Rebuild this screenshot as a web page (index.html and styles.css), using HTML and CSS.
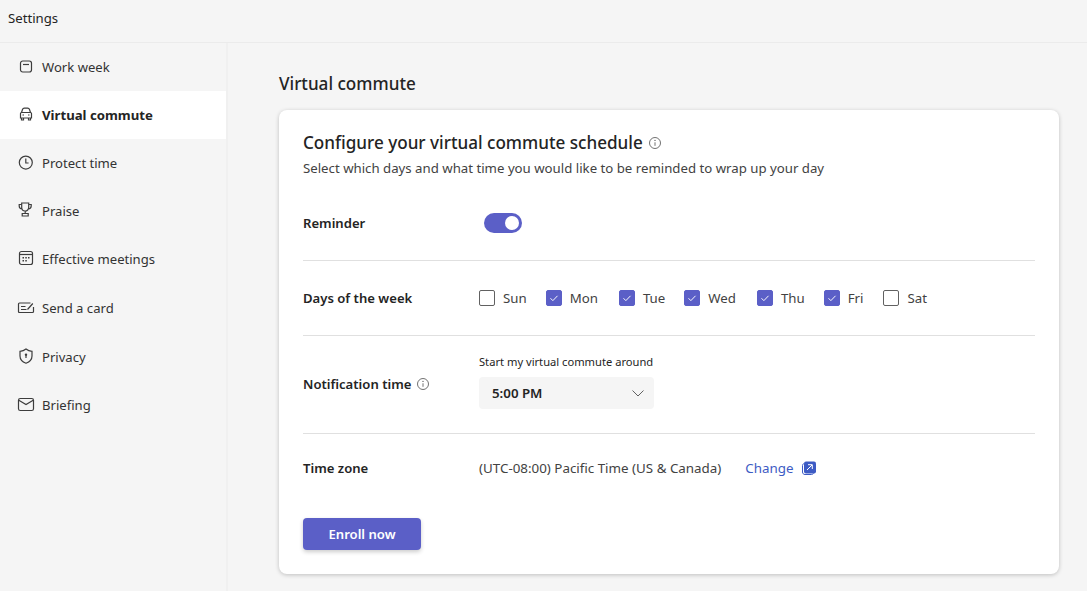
FILE: index.html
```html
<!DOCTYPE html>
<html lang="en">
<head>
<meta charset="utf-8">
<title>Settings</title>
<link rel="stylesheet" href="styles.css">
</head>
<body>
<header class="topbar">Settings</header>
<div class="shell">
  <nav class="sidebar">
    <a class="nav-item"><svg class="nav-icon" viewBox="0 0 20 20"><rect x="4.500" y="5" width="11" height="11" rx="2.200"/><path d="M7 8.500h6"/></svg><span>Work week</span></a>
    <a class="nav-item active"><svg class="nav-icon" viewBox="0 0 20 20"><path d="M5.500 8.500l1-3C6.800 4.600 7.400 4.200 8.300 4.200h3.400c.9 0 1.500.4 1.800 1.300l1 3M5.500 8.500h9c.6 0 1 .4 1 1v4.500h-11V9.500c0-.6.4-1 1-1zM5.500 14v2h2v-2M12.500 14v2h2v-2"/><path class="dot" d="M6.500 10.500h1.500v1H6.500zM12 10.500h1.500v1H12z"/></svg><span>Virtual commute</span></a>
    <a class="nav-item"><svg class="nav-icon" viewBox="0 0 20 20"><circle cx="9.800" cy="10.600" r="6.500"/><path d="M9.800 6.500v4.500h2.800"/></svg><span>Protect time</span></a>
    <a class="nav-item"><svg class="nav-icon" viewBox="0 0 20 20"><path d="M5.700 3h7v4.500a3.500 3.500 0 0 1-7 0zM5.700 4.500H3.200v1.500c0 1.500 1.200 2.800 3 3M12.700 4.500h2.500v1.500c0 1.500-1.200 2.800-3 3M9.200 11v2.500M6.200 13.500h6v2.500h-6z"/></svg><span>Praise</span></a>
    <a class="nav-item"><svg class="nav-icon" viewBox="0 0 20 20"><rect x="3.500" y="3.500" width="13" height="13" rx="2"/><path d="M3.500 6.500h13"/><path class="dot" d="M6.500 9h1.500v1.500H6.500zM9.300 9h1.500v1.500H9.300zM12 9h1.500v1.500H12zM6.500 12h1.500v1.500H6.500zM9.300 12h1.500v1.500H9.300z"/></svg><span>Effective meetings</span></a>
    <a class="nav-item nudge"><svg class="nav-icon" viewBox="0 0 20 20"><path d="M17.500 10v4.500c0 .6-.5 1-1 1H3.500c-.6 0-1-.4-1-1v-7.500c0-.6.4-1 1-1h11"/><path d="M5 9.500h4.500M5 12.500h5.500M11.500 12.500L16.800 6.500"/></svg><span>Send a card</span></a>
    <a class="nav-item nudge"><svg class="nav-icon" viewBox="0 0 20 20"><path d="M10 3c1.800 1.500 3.800 2.200 6 2.300V10c0 3.500-2.200 5.800-6 7.200-3.800-1.400-6-3.700-6-7.200V5.300C6.200 5.200 8.200 4.500 10 3z"/><circle class="dot" cx="10" cy="8.800" r="1.200"/><path d="M10 9.500v2.500"/></svg><span>Privacy</span></a>
    <a class="nav-item"><svg class="nav-icon" viewBox="0 0 20 20"><rect x="2.500" y="4.500" width="15" height="12" rx="1.800"/><path d="M2.800 6.300L10 10.500l7.200-4.200"/></svg><span>Briefing</span></a>
  </nav>
  <main class="content">
    <h1 class="page-title">Virtual commute</h1>
    <section class="card">
      <div class="card-head">
        <h2 class="card-title">Configure your virtual commute schedule <svg class="info" viewBox="0 0 14 14"><circle cx="7" cy="7" r="5.500"/><path d="M7 6.300v3.500"/><circle class="info-dot" cx="7" cy="4.400" r=".7"/></svg></h2>
        <p class="card-sub">Select which days and what time you would like to be reminded to wrap up your day</p>
      </div>
      <div class="row row-reminder">
        <div class="label">Reminder</div>
        <div class="toggle"><span class="knob"></span></div>
      </div>
      <div class="row row-days">
        <div class="label">Days of the week</div>
        <div class="days">
          <label class="day d-sun"><span class="box"></span>Sun</label>
          <label class="day d-mon"><span class="box on"><svg viewBox="0 0 16 16"><path d="M4 8.300l2.700 2.700L12 5.500"/></svg></span>Mon</label>
          <label class="day d-tue"><span class="box on"><svg viewBox="0 0 16 16"><path d="M4 8.300l2.700 2.700L12 5.500"/></svg></span>Tue</label>
          <label class="day d-wed"><span class="box on"><svg viewBox="0 0 16 16"><path d="M4 8.300l2.700 2.700L12 5.500"/></svg></span>Wed</label>
          <label class="day d-thu"><span class="box on"><svg viewBox="0 0 16 16"><path d="M4 8.300l2.700 2.700L12 5.500"/></svg></span>Thu</label>
          <label class="day d-fri"><span class="box on"><svg viewBox="0 0 16 16"><path d="M4 8.300l2.700 2.700L12 5.500"/></svg></span>Fri</label>
          <label class="day"><span class="box"></span>Sat</label>
        </div>
      </div>
      <div class="row row-time">
        <div class="label">Notification time <svg class="info" viewBox="0 0 14 14"><circle cx="7" cy="7" r="5.500"/><path d="M7 6.300v3.500"/><circle class="info-dot" cx="7" cy="4.400" r=".7"/></svg></div>
        <div class="time-col">
          <div class="hint">Start my virtual commute around</div>
          <div class="select"><span>5:00 PM</span><svg viewBox="0 0 16 16"><path d="M2.500 5.500L8 11l5.500-5.500"/></svg></div>
        </div>
      </div>
      <div class="row row-zone">
        <div class="label">Time zone</div>
        <div class="zone"><span>(UTC-08:00) Pacific Time (US &amp; Canada)</span><a class="link">Change</a><svg class="ext" viewBox="0 0 16 16"><rect class="ext-fill" x="3" y="1.500" width="12" height="12" rx="2"/><path class="ext-back" d="M3 3.500C1.800 4 1.500 4.800 1.500 5.500V12c0 1.500 1 2.500 2.500 2.500h6.500c.8 0 1.500-.4 2-1"/><path class="ext-arrow" d="M6 10l5-5M7 4.700h4.300V9"/></svg></div>
      </div>
      <button class="enroll">Enroll now</button>
    </section>
  </main>
</div>
</body>
</html>
```
FILE: styles.css
```css
* { box-sizing: border-box; }
html, body { margin: 0; height: 100%; }
body {
  width: 1087px;
  height: 591px;
  overflow: hidden;
  background: #f5f5f5;
  color: #242424;
  font-family: "Noto Sans", "Open Sans", sans-serif;
  font-size: 13px;
}
.topbar {
  height: 43px;
  padding: 0 8px 6px;
  display: flex;
  align-items: center;
  border-bottom: 1px solid #ebebeb;
  font-size: 13.200px;
}
.shell { display: flex; height: 548px; }
.sidebar {
  width: 228px;
  flex: none;
  border-right: 2px solid #f0f0f0;
  display: flex;
  flex-direction: column;
}
.nav-item {
  height: 48px;
  flex: none;
  display: flex;
  align-items: center;
  gap: 6px;
  padding-left: 16px;
  font-size: 13.100px;
  color: #333;
}
.nav-item.nudge { margin-top: 1px; }
.nav-item.active { background: #fff; font-size: 13.200px; font-weight: 700; color: #242424; }
.nav-icon {
  width: 20px;
  height: 20px;
  margin-top: -2px;
  fill: none;
  stroke: #3d3d3d;
  stroke-width: 1.200;
}
.nav-icon .dot { fill: #3d3d3d; stroke: none; }
.content { flex: 1; padding: 28px 28px 0 51px; }
.page-title {
  margin: 0 0 13px;
  font-size: 17.100px;
  line-height: 26px;
  font-weight: 500;
}
.card {
  height: 464px;
  padding: 20px 24px 0;
  background: #fff;
  border-radius: 8px;
  box-shadow: 0 1px 4px rgba(0, 0, 0, .22);
}
.card-title {
  margin: 0;
  font-size: 17.100px;
  line-height: 26px;
  font-weight: 500;
  display: flex;
  align-items: center;
  gap: 5px;
}
.card-sub {
  margin: 0;
  font-size: 13.230px;
  line-height: 24px;
  color: #424242;
}
.info {
  width: 14px;
  height: 14px;
  fill: none;
  stroke: #616161;
  stroke-width: .9;
}
.info-dot { fill: #616161; stroke: none; }
.row { display: flex; align-items: center; border-bottom: 1px solid #e0e0e0; }
.label {
  width: 176px;
  flex: none;
  display: flex;
  align-items: center;
  gap: 5px;
  font-size: 13.100px;
  font-weight: 600;
}
.row-reminder { height: 81px; padding-top: 6px; }
.toggle {
  width: 38px;
  height: 20px;
  margin: 0 0 0 5px;
  padding: 3px;
  display: flex;
  justify-content: flex-end;
  background: #5b5fc7;
  border-radius: 10px;
}
.knob { width: 14px; height: 14px; border-radius: 50%; background: #fff; }
.row-days { height: 75px; }
.days { display: flex; align-items: center; font-size: 13.250px; color: #424242; }
.day { display: flex; align-items: center; gap: 8px; }
.box {
  width: 16px;
  height: 16px;
  border: 1px solid #616161;
  border-radius: 2px;
  display: flex;
}
.box.on { background: #5b5fc7; border-color: #5b5fc7; }
.box svg { width: 14px; height: 14px; fill: none; stroke: #fff; stroke-width: 1.100; }
.d-sun { margin-right: 19px; }
.d-mon { margin-right: 21px; }
.d-tue { margin-right: 19px; }
.d-wed { margin-right: 21px; }
.d-thu { margin-right: 19px; }
.d-fri { margin-right: 20px; }
.row-time { height: 98px; padding-bottom: 1px; }
.time-col { display: flex; flex-direction: column; gap: 8px; margin-bottom: 5px; }
.hint { font-size: 11.170px; line-height: 15px; color: #242424; }
.select {
  width: 175px;
  height: 32px;
  padding: 0 8px 0 13px;
  display: flex;
  align-items: center;
  justify-content: space-between;
  background: #f5f5f5;
  border-radius: 4px;
  font-size: 13.300px;
  font-weight: 600;
}
.select svg { width: 16px; height: 16px; fill: none; stroke: #616161; stroke-width: 1; }
.row-zone { height: 69px; padding-bottom: 1px; border-bottom: 0; }
.zone { display: flex; align-items: center; font-size: 13.370px; color: #424242; }
.link { margin-left: 24px; color: #3d5bc4; }
.ext { width: 16px; height: 16px; margin-left: 7px; }
.ext-fill { fill: #3d5bc4; }
.ext-back { fill: none; stroke: #3d5bc4; stroke-width: 1; }
.ext-arrow { fill: none; stroke: #fff; stroke-width: 1; }
.enroll {
  display: block;
  width: 118px;
  height: 32px;
  margin-top: 15px;
  padding: 0;
  border: 0;
  border-radius: 4px;
  background: #5b5fc7;
  color: #fff;
  font: 600 13.100px "Noto Sans", "Open Sans", sans-serif;
  box-shadow: 0 2px 4px rgba(0, 0, 0, .2);
}
```
